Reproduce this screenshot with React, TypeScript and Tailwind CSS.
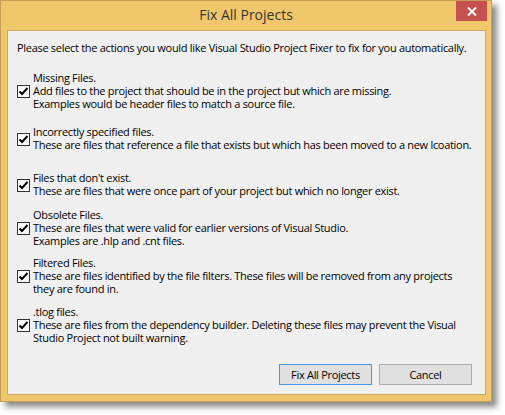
import React from "react";

const items = [
  {
    id: "missing",
    mt: "mt-[17px]",
    lines: [
      "Missing Files.",
      "Add files to the project that should be in the project but which are missing.",
      "Examples would be header files to match a source file.",
    ],
  },
  {
    id: "incorrect",
    mt: "mt-[15px]",
    lines: [
      "Incorrectly specified files.",
      "These are files that reference a file that exists but which has been moved to a new lcoation.",
    ],
  },
  {
    id: "nonexist",
    mt: "mt-[20px]",
    lines: ["Files that don't exist.", "These are files that were once part of your project but which no longer exist."],
  },
  {
    id: "obsolete",
    mt: "mt-[11px]",
    lines: [
      "Obsolete Files.",
      "These are files that were valid for earlier versions of Visual Studio.",
      "Examples are .hlp and .cnt files.",
    ],
  },
  {
    id: "filtered",
    mt: "mt-[9px]",
    lines: [
      "Filtered Files.",
      "These are files identified by the file filters. These files will be removed from any projects",
      "they are found in.",
    ],
  },
  {
    id: "tlog",
    mt: "mt-[10px]",
    lines: [
      ".tlog files.",
      "These are files from the dependency builder. Deleting these files may prevent the Visual",
      "Studio Project not built warning.",
    ],
  },
];

function CheckBox() {
  return (
    <div className="w-[13px] h-[13px] shrink-0 border border-[#333333] bg-white flex items-center justify-center mt-[2px]">
      <svg width="11" height="11" viewBox="0 0 11 11">
        <polyline points="1.5,5.5 4,8 9.5,2" fill="none" stroke="#000" strokeWidth="2" />
      </svg>
    </div>
  );
}

export default function App() {
  return (
    <div className="min-h-screen bg-white font-['Open_Sans',sans-serif] text-black">
      <div className="w-[492px] h-[402px] border border-[#c29f54] bg-[#f0c86b] flex flex-col shadow-[5px_5px_6px_rgba(0,0,0,0.45)]">
        <div className="relative h-[29px] flex items-center justify-center">
          <span className="text-[14px] text-[#333333] leading-none -mt-[1px]">Fix All Projects</span>
          <div className="absolute right-[4px] top-0 w-[31px] h-[20px] bg-[#c75050] flex items-center justify-center">
            <svg width="10" height="9" viewBox="0 0 10 9">
              <path d="M1 0.5 L9 8.5 M9 0.5 L1 8.5" stroke="#fff" strokeWidth="2" />
            </svg>
          </div>
        </div>
        <div className="ml-[6px] mr-[5px] mb-[6px] flex-1 border border-[#c9a85e] bg-[#f0f0f0] flex flex-col text-[11px] leading-[13px] tracking-[-0.3px]">
          <p className="pl-[9px] pt-[10px] whitespace-nowrap">
            Please select the actions you would like Visual Studio Project Fixer to fix for you automatically.
          </p>
          {items.map((it) => (
            <div key={it.id} className={`flex items-center gap-[3px] pl-[9px] ${it.mt}`}>
              <CheckBox />
              <div>
                {it.lines.map((l, i) => (
                  <div key={i} className="whitespace-nowrap">
                    {l}
                  </div>
                ))}
              </div>
            </div>
          ))}
          <div className="mt-auto flex justify-end gap-[7px] pr-[13px] pb-[9px]">
            <button className="w-[93px] h-[21px] border border-[#3c9bf0] bg-[#e1e1e1] text-[11px]">Fix All Projects</button>
            <button className="w-[93px] h-[21px] border border-[#adadad] bg-[#e1e1e1] text-[11px]">Cancel</button>
          </div>
        </div>
      </div>
    </div>
  );
}
